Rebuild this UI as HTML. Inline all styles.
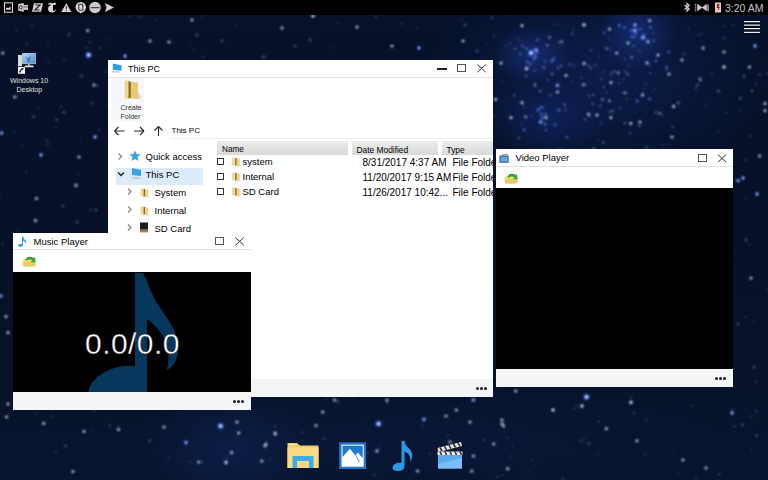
<!DOCTYPE html>
<html><head><meta charset="utf-8">
<style>
*{margin:0;padding:0;box-sizing:border-box}
html,body{width:768px;height:480px;overflow:hidden;font-family:"Liberation Sans",sans-serif}
body{position:relative;background:#07101f}
.a{position:absolute}
.t{position:absolute;white-space:nowrap;line-height:1}
#bg{position:absolute;left:0;top:0;width:768px;height:480px;
background:
radial-gradient(ellipse 40px 30px at 532px 55px, rgba(40,80,200,0.35), rgba(40,80,200,0) 100%),
radial-gradient(ellipse 40px 40px at 638px 32px, rgba(40,80,200,0.35), rgba(40,80,200,0) 100%),
radial-gradient(ellipse 170px 110px at 600px 75px, rgba(18,45,120,0.42), rgba(18,45,120,0) 100%),
radial-gradient(ellipse 60px 40px at 548px 118px, rgba(30,60,170,0.3), rgba(30,60,170,0) 100%),
radial-gradient(ellipse 90px 60px at 230px 450px, rgba(18,45,110,0.35), rgba(18,45,110,0) 100%),
radial-gradient(ellipse 300px 60px at 420px 440px, rgba(12,30,70,0.4), rgba(12,30,70,0) 100%),
linear-gradient(#06112a,#061026 50%,#08142e);
}
.win{position:absolute;background:#fff;overflow:hidden}
.sep{position:absolute;height:1px;background:#dcdcdc}
.foot{position:absolute;background:#f4f5f7}
.dots{position:absolute;width:12px;height:3px}
.dots i{position:absolute;top:0;width:3px;height:3px;border-radius:50%;background:#1a1a1a}
</style></head><body>
<div id="bg"></div>
<svg class="a" style="left:0;top:0;filter:blur(0.9px)" width="768" height="480" viewBox="0 0 768 480">
<circle cx="514.3" cy="95.1" r="1.2" fill="#5068c0" opacity="0.83"/>
<circle cx="646.6" cy="147.1" r="1.3" fill="#5068c0" opacity="0.80"/>
<circle cx="649.4" cy="99.0" r="1.2" fill="#8090d0" opacity="0.85"/>
<circle cx="537.5" cy="39.8" r="1.5" fill="#5068c0" opacity="0.73"/>
<circle cx="569.4" cy="64.5" r="1.4" fill="#8090d0" opacity="0.43"/>
<circle cx="740.4" cy="98.3" r="1.4" fill="#8090d0" opacity="0.56"/>
<circle cx="561.2" cy="65.7" r="1.3" fill="#6878c8" opacity="0.65"/>
<circle cx="559.5" cy="42.3" r="1.1" fill="#a0b0e0" opacity="0.68"/>
<circle cx="626.5" cy="73.1" r="1.1" fill="#a0b0e0" opacity="0.51"/>
<circle cx="593.5" cy="94.8" r="1.1" fill="#8090d0" opacity="0.82"/>
<circle cx="601.3" cy="78.9" r="1.5" fill="#6878c8" opacity="0.43"/>
<circle cx="522.0" cy="124.3" r="0.9" fill="#5068c0" opacity="0.71"/>
<circle cx="609.9" cy="48.8" r="1.1" fill="#8090d0" opacity="0.41"/>
<circle cx="672.7" cy="126.9" r="0.9" fill="#8090d0" opacity="0.80"/>
<circle cx="639.3" cy="126.0" r="1.2" fill="#5068c0" opacity="0.89"/>
<circle cx="608.9" cy="38.6" r="1.0" fill="#5068c0" opacity="0.61"/>
<circle cx="612.8" cy="110.9" r="1.5" fill="#a0b0e0" opacity="0.41"/>
<circle cx="526.4" cy="48.6" r="1.5" fill="#8090d0" opacity="0.51"/>
<circle cx="593.7" cy="148.8" r="1.4" fill="#a0b0e0" opacity="0.59"/>
<circle cx="642.8" cy="92.3" r="0.9" fill="#6878c8" opacity="0.58"/>
<circle cx="573.7" cy="65.5" r="1.4" fill="#5068c0" opacity="0.47"/>
<circle cx="525.8" cy="116.9" r="1.4" fill="#a0b0e0" opacity="0.81"/>
<circle cx="600.1" cy="106.0" r="1.3" fill="#6878c8" opacity="0.59"/>
<circle cx="571.9" cy="81.8" r="1.0" fill="#8090d0" opacity="0.42"/>
<circle cx="650.2" cy="73.1" r="1.1" fill="#5068c0" opacity="0.81"/>
<circle cx="552.0" cy="61.0" r="1.5" fill="#6878c8" opacity="0.89"/>
<circle cx="656.0" cy="112.6" r="1.1" fill="#8090d0" opacity="0.86"/>
<circle cx="603.6" cy="87.0" r="1.1" fill="#a0b0e0" opacity="0.52"/>
<circle cx="654.5" cy="89.4" r="1.0" fill="#6878c8" opacity="0.47"/>
<circle cx="540.3" cy="91.0" r="1.3" fill="#6878c8" opacity="0.86"/>
<circle cx="535.0" cy="85.9" r="1.5" fill="#a0b0e0" opacity="0.41"/>
<circle cx="547.3" cy="45.3" r="1.1" fill="#a0b0e0" opacity="0.90"/>
<circle cx="678.3" cy="102.9" r="1.4" fill="#8090d0" opacity="0.77"/>
<circle cx="656.1" cy="61.0" r="1.4" fill="#5068c0" opacity="0.84"/>
<circle cx="492.6" cy="115.2" r="1.2" fill="#5068c0" opacity="0.71"/>
<circle cx="531.6" cy="115.6" r="0.9" fill="#8090d0" opacity="0.72"/>
<circle cx="744.0" cy="76.5" r="1.1" fill="#a0b0e0" opacity="0.77"/>
<circle cx="534.1" cy="59.0" r="1.2" fill="#8090d0" opacity="0.66"/>
<circle cx="588.9" cy="95.9" r="1.0" fill="#8090d0" opacity="0.75"/>
<circle cx="503.4" cy="81.0" r="1.1" fill="#5068c0" opacity="0.41"/>
<circle cx="566.8" cy="137.2" r="1.2" fill="#6878c8" opacity="0.78"/>
<circle cx="548.0" cy="80.3" r="1.3" fill="#5068c0" opacity="0.50"/>
<circle cx="723.8" cy="37.7" r="1.0" fill="#5068c0" opacity="0.86"/>
<circle cx="609.4" cy="100.8" r="1.4" fill="#a0b0e0" opacity="0.82"/>
<circle cx="592.9" cy="104.0" r="1.2" fill="#5068c0" opacity="0.86"/>
<circle cx="633.5" cy="45.7" r="1.3" fill="#5068c0" opacity="0.76"/>
<circle cx="653.5" cy="33.1" r="0.9" fill="#a0b0e0" opacity="0.42"/>
<circle cx="614.2" cy="71.7" r="1.2" fill="#a0b0e0" opacity="0.55"/>
<circle cx="603.5" cy="72.4" r="1.1" fill="#6878c8" opacity="0.49"/>
<circle cx="606.6" cy="48.7" r="1.4" fill="#6878c8" opacity="0.89"/>
<circle cx="625.2" cy="92.7" r="1.5" fill="#a0b0e0" opacity="0.74"/>
<circle cx="624.9" cy="123.1" r="1.3" fill="#6878c8" opacity="0.78"/>
<circle cx="581.5" cy="77.6" r="1.1" fill="#6878c8" opacity="0.57"/>
<circle cx="572.4" cy="34.1" r="1.1" fill="#6878c8" opacity="0.80"/>
<circle cx="624.9" cy="70.5" r="1.0" fill="#5068c0" opacity="0.63"/>
<circle cx="491.8" cy="17.7" r="1.2" fill="#5068c0" opacity="0.73"/>
<circle cx="565.6" cy="109.6" r="1.0" fill="#6878c8" opacity="0.83"/>
<circle cx="637.2" cy="100.9" r="1.5" fill="#5068c0" opacity="0.89"/>
<circle cx="640.0" cy="50.9" r="0.9" fill="#8090d0" opacity="0.57"/>
<circle cx="550.5" cy="95.2" r="1.0" fill="#8090d0" opacity="0.83"/>
<circle cx="583.1" cy="84.6" r="1.3" fill="#a0b0e0" opacity="0.86"/>
<circle cx="668.6" cy="51.7" r="1.5" fill="#5068c0" opacity="0.65"/>
<circle cx="628.2" cy="74.7" r="1.2" fill="#6878c8" opacity="0.68"/>
<circle cx="643.9" cy="35.2" r="1.2" fill="#6878c8" opacity="0.82"/>
<circle cx="543.7" cy="67.3" r="1.5" fill="#5068c0" opacity="0.84"/>
<circle cx="553.9" cy="58.4" r="1.5" fill="#6878c8" opacity="0.66"/>
<circle cx="558.0" cy="68.1" r="1.2" fill="#8090d0" opacity="0.70"/>
<circle cx="782.1" cy="98.3" r="1.2" fill="#5068c0" opacity="0.89"/>
<circle cx="622.3" cy="92.3" r="0.9" fill="#6878c8" opacity="0.67"/>
<circle cx="649.1" cy="65.3" r="1.2" fill="#5068c0" opacity="0.57"/>
<circle cx="733.2" cy="25.3" r="1.2" fill="#5068c0" opacity="0.45"/>
<circle cx="585.0" cy="84.7" r="1.0" fill="#a0b0e0" opacity="0.79"/>
<circle cx="645.5" cy="83.7" r="0.9" fill="#6878c8" opacity="0.54"/>
<circle cx="591.3" cy="50.5" r="1.0" fill="#5068c0" opacity="0.77"/>
<circle cx="660.0" cy="113.3" r="1.3" fill="#a0b0e0" opacity="0.75"/>
<circle cx="611.0" cy="74.0" r="1.4" fill="#5068c0" opacity="0.71"/>
<circle cx="552.0" cy="74.0" r="1.4" fill="#6878c8" opacity="0.71"/>
<circle cx="631.7" cy="57.2" r="1.4" fill="#a0b0e0" opacity="0.56"/>
<circle cx="628.6" cy="66.1" r="1.0" fill="#6878c8" opacity="0.44"/>
<circle cx="543.0" cy="107.7" r="1.2" fill="#5068c0" opacity="0.75"/>
<circle cx="630.0" cy="133.6" r="1.0" fill="#8090d0" opacity="0.68"/>
<circle cx="518.8" cy="137.9" r="1.0" fill="#a0b0e0" opacity="0.65"/>
<circle cx="604.2" cy="32.8" r="1.4" fill="#6878c8" opacity="0.64"/>
<circle cx="717.2" cy="90.3" r="1.0" fill="#5068c0" opacity="0.49"/>
<circle cx="759.8" cy="74.4" r="1.2" fill="#8090d0" opacity="0.47"/>
<circle cx="588.2" cy="65.4" r="1.1" fill="#8090d0" opacity="0.63"/>
<circle cx="526.1" cy="75.9" r="0.9" fill="#a0b0e0" opacity="0.75"/>
<circle cx="624.7" cy="59.0" r="1.1" fill="#5068c0" opacity="0.59"/>
<circle cx="684.1" cy="54.3" r="1.2" fill="#8090d0" opacity="0.41"/>
<circle cx="698.6" cy="35.3" r="1.2" fill="#5068c0" opacity="0.50"/>
<circle cx="544.9" cy="61.5" r="1.1" fill="#a0b0e0" opacity="0.46"/>
<circle cx="598.2" cy="56.4" r="1.0" fill="#5068c0" opacity="0.56"/>
<circle cx="534.7" cy="70.7" r="1.4" fill="#5068c0" opacity="0.60"/>
<circle cx="595.4" cy="64.9" r="1.1" fill="#a0b0e0" opacity="0.45"/>
<circle cx="618.3" cy="72.7" r="1.5" fill="#a0b0e0" opacity="0.73"/>
<circle cx="546.1" cy="130.0" r="1.2" fill="#6878c8" opacity="0.59"/>
<circle cx="700.4" cy="80.0" r="1.4" fill="#8090d0" opacity="0.89"/>
<circle cx="695.8" cy="87.9" r="1.1" fill="#6878c8" opacity="0.60"/>
<circle cx="643.9" cy="88.2" r="0.9" fill="#5068c0" opacity="0.53"/>
<circle cx="589.7" cy="116.0" r="1.5" fill="#5068c0" opacity="0.68"/>
<circle cx="699.7" cy="78.2" r="1.2" fill="#8090d0" opacity="0.73"/>
<circle cx="666.5" cy="69.1" r="1.1" fill="#6878c8" opacity="0.89"/>
<circle cx="653.9" cy="40.6" r="1.2" fill="#8090d0" opacity="0.65"/>
<circle cx="584.8" cy="119.4" r="1.1" fill="#a0b0e0" opacity="0.54"/>
<circle cx="549.6" cy="37.5" r="1.3" fill="#a0b0e0" opacity="0.77"/>
<circle cx="718.7" cy="91.6" r="1.3" fill="#8090d0" opacity="0.60"/>
<circle cx="590.8" cy="67.9" r="1.3" fill="#a0b0e0" opacity="0.43"/>
<circle cx="767.9" cy="73.2" r="1.4" fill="#8090d0" opacity="0.51"/>
<circle cx="589.7" cy="50.2" r="0.9" fill="#6878c8" opacity="0.45"/>
<circle cx="603.3" cy="142.6" r="1.3" fill="#8090d0" opacity="0.63"/>
<circle cx="606.6" cy="92.5" r="1.0" fill="#6878c8" opacity="0.62"/>
<circle cx="561.9" cy="41.6" r="1.3" fill="#a0b0e0" opacity="0.74"/>
<circle cx="524.1" cy="129.8" r="1.5" fill="#6878c8" opacity="0.77"/>
<circle cx="602.5" cy="99.6" r="1.4" fill="#a0b0e0" opacity="0.71"/>
<circle cx="564.7" cy="104.6" r="1.3" fill="#6878c8" opacity="0.78"/>
<circle cx="619.6" cy="108.1" r="1.4" fill="#6878c8" opacity="0.42"/>
<circle cx="651.6" cy="91.9" r="0.9" fill="#5068c0" opacity="0.42"/>
<circle cx="609.7" cy="111.8" r="1.4" fill="#8090d0" opacity="0.48"/>
<circle cx="534.9" cy="83.8" r="1.1" fill="#a0b0e0" opacity="0.77"/>
<circle cx="532.5" cy="51.0" r="1.1" fill="#5a7af0" opacity="0.82"/>
<circle cx="522.5" cy="45.8" r="1.2" fill="#5a7af0" opacity="0.67"/>
<circle cx="530.4" cy="63.9" r="1.3" fill="#5a7af0" opacity="0.76"/>
<circle cx="537.2" cy="52.6" r="1.4" fill="#5a7af0" opacity="0.80"/>
<circle cx="537.5" cy="50.0" r="1.3" fill="#5a7af0" opacity="0.54"/>
<circle cx="533.0" cy="51.3" r="1.1" fill="#5a7af0" opacity="0.73"/>
<circle cx="520.4" cy="53.9" r="1.2" fill="#5a7af0" opacity="0.81"/>
<circle cx="535.3" cy="54.9" r="1.5" fill="#5a7af0" opacity="0.53"/>
<circle cx="527.3" cy="62.1" r="1.6" fill="#5a7af0" opacity="0.61"/>
<circle cx="535.1" cy="57.4" r="1.6" fill="#5a7af0" opacity="0.65"/>
<circle cx="644.1" cy="38.3" r="1.5" fill="#5a7af0" opacity="0.87"/>
<circle cx="650.4" cy="27.1" r="1.4" fill="#5a7af0" opacity="0.82"/>
<circle cx="633.9" cy="36.9" r="1.3" fill="#5a7af0" opacity="0.87"/>
<circle cx="640.2" cy="29.2" r="1.3" fill="#5a7af0" opacity="0.65"/>
<circle cx="631.4" cy="36.6" r="1.3" fill="#5a7af0" opacity="0.58"/>
<circle cx="624.5" cy="27.8" r="1.4" fill="#5a7af0" opacity="0.83"/>
<circle cx="632.0" cy="30.6" r="1.6" fill="#5a7af0" opacity="0.85"/>
<circle cx="635.7" cy="33.2" r="1.4" fill="#5a7af0" opacity="0.72"/>
<circle cx="619.4" cy="25.6" r="1.5" fill="#5a7af0" opacity="0.82"/>
<circle cx="644.1" cy="35.0" r="1.6" fill="#5a7af0" opacity="0.53"/>
<circle cx="555.0" cy="124.8" r="1.7" fill="#5a7af0" opacity="0.53"/>
<circle cx="542.4" cy="117.5" r="1.6" fill="#5a7af0" opacity="0.76"/>
<circle cx="545.1" cy="124.2" r="1.6" fill="#5a7af0" opacity="0.71"/>
<circle cx="545.6" cy="114.0" r="1.3" fill="#5a7af0" opacity="0.89"/>
<circle cx="541.2" cy="113.8" r="1.4" fill="#5a7af0" opacity="0.79"/>
<circle cx="541.0" cy="107.1" r="1.3" fill="#5a7af0" opacity="0.83"/>
<circle cx="538.1" cy="109.8" r="1.6" fill="#5a7af0" opacity="0.83"/>
<circle cx="558.5" cy="110.3" r="1.5" fill="#5a7af0" opacity="0.71"/>
<circle cx="192.0" cy="20.0" r="1.6" fill="#c0cae6" opacity="0.9"/>
<circle cx="150.0" cy="41.0" r="1.6" fill="#c0cae6" opacity="0.9"/>
<circle cx="169.0" cy="42.0" r="1.6" fill="#c0cae6" opacity="0.9"/>
<circle cx="197.0" cy="35.0" r="1.4" fill="#6a78a0" opacity="0.6"/>
<circle cx="282.0" cy="28.0" r="1.6" fill="#c0cae6" opacity="0.9"/>
<circle cx="125.0" cy="56.0" r="2.4" fill="#3058e0" opacity="0.5"/><circle cx="125.0" cy="56.0" r="1.2" fill="#d0dcff"/>
<circle cx="295.0" cy="46.0" r="1.4" fill="#6a78a0" opacity="0.6"/>
<circle cx="222.0" cy="41.0" r="1.4" fill="#6a78a0" opacity="0.6"/>
<circle cx="264.0" cy="57.0" r="1.4" fill="#6a78a0" opacity="0.6"/>
<circle cx="313.0" cy="16.0" r="2.2" fill="#8090c0" opacity="0.45"/><circle cx="313.0" cy="16.0" r="1.3" fill="#f0f4ff"/>
<circle cx="357.0" cy="27.0" r="1.6" fill="#c0cae6" opacity="0.9"/>
<circle cx="392.0" cy="46.0" r="1.6" fill="#c0cae6" opacity="0.9"/>
<circle cx="419.0" cy="48.0" r="2.4" fill="#3058e0" opacity="0.5"/><circle cx="419.0" cy="48.0" r="1.2" fill="#d0dcff"/>
<circle cx="463.0" cy="41.0" r="1.6" fill="#c0cae6" opacity="0.9"/>
<circle cx="465.0" cy="25.0" r="1.4" fill="#6a78a0" opacity="0.6"/>
<circle cx="310.0" cy="40.0" r="1.4" fill="#6a78a0" opacity="0.6"/>
<circle cx="477.0" cy="51.0" r="1.4" fill="#6a78a0" opacity="0.6"/>
<circle cx="14.6" cy="97.0" r="1.6" fill="#c0cae6" opacity="0.9"/>
<circle cx="1.5" cy="133.0" r="2.4" fill="#3058e0" opacity="0.5"/><circle cx="1.5" cy="133.0" r="1.2" fill="#d0dcff"/>
<circle cx="41.0" cy="155.0" r="2.4" fill="#3058e0" opacity="0.5"/><circle cx="41.0" cy="155.0" r="1.2" fill="#d0dcff"/>
<circle cx="79.0" cy="157.0" r="1.6" fill="#c0cae6" opacity="0.9"/>
<circle cx="95.0" cy="137.0" r="2.4" fill="#3058e0" opacity="0.5"/><circle cx="95.0" cy="137.0" r="1.2" fill="#d0dcff"/>
<circle cx="36.5" cy="198.5" r="1.6" fill="#c0cae6" opacity="0.9"/>
<circle cx="76.0" cy="185.4" r="1.6" fill="#c0cae6" opacity="0.9"/>
<circle cx="35.6" cy="220.4" r="1.6" fill="#c0cae6" opacity="0.9"/>
<circle cx="33.5" cy="117.0" r="1.4" fill="#6a78a0" opacity="0.6"/>
<circle cx="57.0" cy="120.0" r="1.4" fill="#6a78a0" opacity="0.6"/>
<circle cx="64.0" cy="112.5" r="1.4" fill="#6a78a0" opacity="0.6"/>
<circle cx="62.7" cy="206.0" r="1.4" fill="#6a78a0" opacity="0.6"/>
<circle cx="77.0" cy="222.0" r="1.4" fill="#6a78a0" opacity="0.6"/>
<circle cx="96.0" cy="210.0" r="1.4" fill="#6a78a0" opacity="0.6"/>
<circle cx="88.6" cy="55.0" r="3.5" fill="#3060ff" opacity="0.55"/><circle cx="88.6" cy="55.0" r="1.8" fill="#f0f4ff"/>
<circle cx="87.7" cy="30.6" r="1.6" fill="#c0cae6" opacity="0.9"/>
<circle cx="2.7" cy="53.0" r="1.6" fill="#c0cae6" opacity="0.9"/>
<circle cx="94.0" cy="85.0" r="1.6" fill="#c0cae6" opacity="0.9"/>
<circle cx="81.5" cy="76.0" r="1.4" fill="#6a78a0" opacity="0.6"/>
<circle cx="16.0" cy="97.0" r="1.4" fill="#6a78a0" opacity="0.6"/>
<circle cx="69.0" cy="34.5" r="1.4" fill="#6a78a0" opacity="0.6"/>
<circle cx="584.0" cy="25.0" r="2.2" fill="#8090c0" opacity="0.45"/><circle cx="584.0" cy="25.0" r="1.3" fill="#f0f4ff"/>
<circle cx="522.0" cy="25.7" r="1.6" fill="#c0cae6" opacity="0.9"/>
<circle cx="609.6" cy="29.0" r="1.6" fill="#c0cae6" opacity="0.9"/>
<circle cx="635.0" cy="25.0" r="2.4" fill="#3058e0" opacity="0.5"/><circle cx="635.0" cy="25.0" r="1.2" fill="#d0dcff"/>
<circle cx="635.0" cy="30.5" r="2.4" fill="#3058e0" opacity="0.5"/><circle cx="635.0" cy="30.5" r="1.2" fill="#d0dcff"/>
<circle cx="628.0" cy="43.0" r="1.6" fill="#c0cae6" opacity="0.9"/>
<circle cx="531.0" cy="53.0" r="3.5" fill="#3060ff" opacity="0.55"/><circle cx="531.0" cy="53.0" r="1.8" fill="#f0f4ff"/>
<circle cx="536.0" cy="50.0" r="2.4" fill="#3058e0" opacity="0.5"/><circle cx="536.0" cy="50.0" r="1.2" fill="#d0dcff"/>
<circle cx="526.6" cy="68.5" r="2.2" fill="#8090c0" opacity="0.45"/><circle cx="526.6" cy="68.5" r="1.3" fill="#f0f4ff"/>
<circle cx="501.0" cy="63.0" r="1.6" fill="#c0cae6" opacity="0.9"/>
<circle cx="616.6" cy="53.0" r="1.6" fill="#c0cae6" opacity="0.9"/>
<circle cx="584.0" cy="63.4" r="1.6" fill="#c0cae6" opacity="0.9"/>
<circle cx="566.0" cy="75.5" r="1.6" fill="#c0cae6" opacity="0.9"/>
<circle cx="611.0" cy="82.5" r="1.6" fill="#c0cae6" opacity="0.9"/>
<circle cx="557.5" cy="85.4" r="2.4" fill="#3058e0" opacity="0.5"/><circle cx="557.5" cy="85.4" r="1.2" fill="#d0dcff"/>
<circle cx="557.5" cy="92.0" r="1.6" fill="#c0cae6" opacity="0.9"/>
<circle cx="495.6" cy="99.4" r="1.6" fill="#c0cae6" opacity="0.9"/>
<circle cx="522.0" cy="102.8" r="1.6" fill="#c0cae6" opacity="0.9"/>
<circle cx="511.0" cy="117.7" r="1.6" fill="#c0cae6" opacity="0.9"/>
<circle cx="540.7" cy="122.0" r="2.4" fill="#3058e0" opacity="0.5"/><circle cx="540.7" cy="122.0" r="1.2" fill="#d0dcff"/>
<circle cx="546.0" cy="117.7" r="1.6" fill="#c0cae6" opacity="0.9"/>
<circle cx="588.5" cy="114.0" r="1.6" fill="#c0cae6" opacity="0.9"/>
<circle cx="597.0" cy="115.0" r="1.6" fill="#c0cae6" opacity="0.9"/>
<circle cx="611.0" cy="117.7" r="1.6" fill="#c0cae6" opacity="0.9"/>
<circle cx="630.7" cy="123.4" r="1.6" fill="#c0cae6" opacity="0.9"/>
<circle cx="515.0" cy="48.8" r="1.4" fill="#6a78a0" opacity="0.6"/>
<circle cx="649.7" cy="20.6" r="1.6" fill="#c0cae6" opacity="0.9"/>
<circle cx="642.6" cy="37.5" r="2.4" fill="#3058e0" opacity="0.5"/><circle cx="642.6" cy="37.5" r="1.2" fill="#d0dcff"/>
<circle cx="648.0" cy="41.7" r="2.4" fill="#3058e0" opacity="0.5"/><circle cx="648.0" cy="41.7" r="1.2" fill="#d0dcff"/>
<circle cx="658.0" cy="55.0" r="1.6" fill="#c0cae6" opacity="0.9"/>
<circle cx="703.0" cy="48.0" r="1.6" fill="#c0cae6" opacity="0.9"/>
<circle cx="724.0" cy="52.0" r="1.6" fill="#c0cae6" opacity="0.9"/>
<circle cx="724.0" cy="67.0" r="2.2" fill="#8090c0" opacity="0.45"/><circle cx="724.0" cy="67.0" r="1.3" fill="#f0f4ff"/>
<circle cx="682.0" cy="60.0" r="1.6" fill="#c0cae6" opacity="0.9"/>
<circle cx="669.0" cy="74.0" r="1.6" fill="#c0cae6" opacity="0.9"/>
<circle cx="666.5" cy="67.0" r="1.4" fill="#6a78a0" opacity="0.6"/>
<circle cx="647.0" cy="62.8" r="1.6" fill="#c0cae6" opacity="0.9"/>
<circle cx="749.5" cy="67.0" r="1.6" fill="#c0cae6" opacity="0.9"/>
<circle cx="755.0" cy="46.0" r="2.4" fill="#3058e0" opacity="0.5"/><circle cx="755.0" cy="46.0" r="1.2" fill="#d0dcff"/>
<circle cx="642.6" cy="95.0" r="1.6" fill="#c0cae6" opacity="0.9"/>
<circle cx="673.6" cy="106.4" r="1.6" fill="#c0cae6" opacity="0.9"/>
<circle cx="640.0" cy="122.0" r="1.6" fill="#c0cae6" opacity="0.9"/>
<circle cx="672.0" cy="137.0" r="1.6" fill="#c0cae6" opacity="0.9"/>
<circle cx="765.0" cy="103.6" r="1.6" fill="#c0cae6" opacity="0.9"/>
<circle cx="765.0" cy="110.6" r="1.6" fill="#c0cae6" opacity="0.9"/>
<circle cx="697.5" cy="85.0" r="1.4" fill="#6a78a0" opacity="0.6"/>
<circle cx="752.0" cy="91.0" r="1.4" fill="#6a78a0" opacity="0.6"/>
<circle cx="738.0" cy="180.6" r="2.4" fill="#3058e0" opacity="0.5"/><circle cx="738.0" cy="180.6" r="1.2" fill="#d0dcff"/>
<circle cx="743.0" cy="178.0" r="2.4" fill="#3058e0" opacity="0.5"/><circle cx="743.0" cy="178.0" r="1.2" fill="#d0dcff"/>
<circle cx="757.0" cy="194.0" r="2.4" fill="#3058e0" opacity="0.5"/><circle cx="757.0" cy="194.0" r="1.2" fill="#d0dcff"/>
<circle cx="759.6" cy="156.0" r="1.6" fill="#c0cae6" opacity="0.9"/>
<circle cx="746.0" cy="240.0" r="1.4" fill="#6a78a0" opacity="0.6"/>
<circle cx="751.0" cy="278.0" r="1.6" fill="#c0cae6" opacity="0.9"/>
<circle cx="738.0" cy="324.0" r="1.4" fill="#6a78a0" opacity="0.6"/>
<circle cx="754.0" cy="367.5" r="1.4" fill="#6a78a0" opacity="0.6"/>
<circle cx="220.6" cy="426.0" r="3.5" fill="#3060ff" opacity="0.55"/><circle cx="220.6" cy="426.0" r="1.8" fill="#f0f4ff"/>
<circle cx="186.0" cy="442.4" r="2.4" fill="#3058e0" opacity="0.5"/><circle cx="186.0" cy="442.4" r="1.2" fill="#d0dcff"/>
<circle cx="226.0" cy="462.4" r="2.2" fill="#8090c0" opacity="0.45"/><circle cx="226.0" cy="462.4" r="1.3" fill="#f0f4ff"/>
<circle cx="231.5" cy="452.6" r="1.6" fill="#c0cae6" opacity="0.9"/>
<circle cx="164.0" cy="427.0" r="1.6" fill="#c0cae6" opacity="0.9"/>
<circle cx="118.5" cy="429.6" r="1.6" fill="#c0cae6" opacity="0.9"/>
<circle cx="83.9" cy="431.5" r="1.6" fill="#c0cae6" opacity="0.9"/>
<circle cx="43.7" cy="423.4" r="1.6" fill="#c0cae6" opacity="0.9"/>
<circle cx="6.6" cy="417.0" r="1.6" fill="#c0cae6" opacity="0.9"/>
<circle cx="65.6" cy="446.0" r="1.4" fill="#6a78a0" opacity="0.6"/>
<circle cx="266.0" cy="444.0" r="1.6" fill="#c0cae6" opacity="0.9"/>
<circle cx="275.0" cy="433.0" r="1.6" fill="#c0cae6" opacity="0.9"/>
<circle cx="73.0" cy="471.6" r="1.6" fill="#c0cae6" opacity="0.9"/>
<circle cx="198.7" cy="462.0" r="1.6" fill="#c0cae6" opacity="0.9"/>
<circle cx="237.0" cy="422.0" r="1.6" fill="#c0cae6" opacity="0.9"/>
<circle cx="238.8" cy="433.0" r="1.6" fill="#c0cae6" opacity="0.9"/>
<circle cx="149.5" cy="440.6" r="1.4" fill="#6a78a0" opacity="0.6"/>
<circle cx="378.6" cy="423.8" r="3.5" fill="#3060ff" opacity="0.55"/><circle cx="378.6" cy="423.8" r="1.8" fill="#f0f4ff"/>
<circle cx="424.0" cy="419.4" r="2.4" fill="#3058e0" opacity="0.5"/><circle cx="424.0" cy="419.4" r="1.2" fill="#d0dcff"/>
<circle cx="334.6" cy="400.0" r="1.6" fill="#c0cae6" opacity="0.9"/>
<circle cx="387.0" cy="400.0" r="1.6" fill="#c0cae6" opacity="0.9"/>
<circle cx="322.8" cy="412.0" r="1.6" fill="#c0cae6" opacity="0.9"/>
<circle cx="316.0" cy="425.5" r="1.6" fill="#c0cae6" opacity="0.9"/>
<circle cx="446.0" cy="416.0" r="1.6" fill="#c0cae6" opacity="0.9"/>
<circle cx="456.5" cy="410.0" r="1.6" fill="#c0cae6" opacity="0.9"/>
<circle cx="473.4" cy="400.0" r="2.4" fill="#3058e0" opacity="0.5"/><circle cx="473.4" cy="400.0" r="1.2" fill="#d0dcff"/>
<circle cx="470.0" cy="422.0" r="1.6" fill="#c0cae6" opacity="0.9"/>
<circle cx="265.0" cy="445.8" r="1.6" fill="#c0cae6" opacity="0.9"/>
<circle cx="275.4" cy="434.0" r="1.6" fill="#c0cae6" opacity="0.9"/>
<circle cx="377.0" cy="450.9" r="1.6" fill="#c0cae6" opacity="0.9"/>
<circle cx="417.6" cy="471.0" r="1.6" fill="#c0cae6" opacity="0.9"/>
<circle cx="471.7" cy="471.0" r="1.6" fill="#c0cae6" opacity="0.9"/>
<circle cx="473.4" cy="456.0" r="1.6" fill="#c0cae6" opacity="0.9"/>
<circle cx="493.7" cy="444.0" r="1.6" fill="#c0cae6" opacity="0.9"/>
<circle cx="502.0" cy="423.8" r="1.6" fill="#c0cae6" opacity="0.9"/>
<circle cx="450.0" cy="442.0" r="1.6" fill="#c0cae6" opacity="0.9"/>
<circle cx="261.8" cy="461.0" r="1.6" fill="#c0cae6" opacity="0.9"/>
<circle cx="338.0" cy="401.8" r="1.4" fill="#6a78a0" opacity="0.6"/>
<circle cx="586.5" cy="397.0" r="3.5" fill="#3060ff" opacity="0.55"/><circle cx="586.5" cy="397.0" r="1.8" fill="#f0f4ff"/>
<circle cx="582.0" cy="406.0" r="2.2" fill="#8090c0" opacity="0.45"/><circle cx="582.0" cy="406.0" r="1.3" fill="#f0f4ff"/>
<circle cx="631.0" cy="402.4" r="2.2" fill="#8090c0" opacity="0.45"/><circle cx="631.0" cy="402.4" r="1.3" fill="#f0f4ff"/>
<circle cx="553.0" cy="410.0" r="2.2" fill="#8090c0" opacity="0.45"/><circle cx="553.0" cy="410.0" r="1.3" fill="#f0f4ff"/>
<circle cx="503.5" cy="426.0" r="1.6" fill="#c0cae6" opacity="0.9"/>
<circle cx="502.0" cy="420.0" r="1.6" fill="#c0cae6" opacity="0.9"/>
<circle cx="606.4" cy="428.6" r="1.6" fill="#c0cae6" opacity="0.9"/>
<circle cx="637.0" cy="440.8" r="1.6" fill="#c0cae6" opacity="0.9"/>
<circle cx="683.0" cy="460.0" r="1.6" fill="#c0cae6" opacity="0.9"/>
<circle cx="706.0" cy="468.0" r="1.6" fill="#c0cae6" opacity="0.9"/>
<circle cx="507.7" cy="468.7" r="1.6" fill="#c0cae6" opacity="0.9"/>
<circle cx="515.7" cy="391.0" r="1.6" fill="#c0cae6" opacity="0.9"/>
<circle cx="732.0" cy="413.0" r="2.4" fill="#3058e0" opacity="0.5"/><circle cx="732.0" cy="413.0" r="1.2" fill="#d0dcff"/>
<circle cx="756.5" cy="435.6" r="1.4" fill="#6a78a0" opacity="0.6"/>
<circle cx="742.5" cy="425.0" r="1.4" fill="#6a78a0" opacity="0.6"/>
<circle cx="589.0" cy="443.6" r="1.4" fill="#6a78a0" opacity="0.6"/>
<circle cx="1.0" cy="296.0" r="2.4" fill="#3058e0" opacity="0.5"/><circle cx="1.0" cy="296.0" r="1.2" fill="#d0dcff"/>
<circle cx="6.0" cy="316.5" r="1.6" fill="#c0cae6" opacity="0.9"/>
<circle cx="8.0" cy="332.7" r="1.6" fill="#c0cae6" opacity="0.9"/>
<circle cx="8.0" cy="404.0" r="1.6" fill="#c0cae6" opacity="0.9"/>
<circle cx="248.7" cy="85.1" r="1.2" fill="#4a5a88" opacity="0.56"/>
<circle cx="55.6" cy="264.2" r="1.2" fill="#4a5a88" opacity="0.45"/>
<circle cx="44.5" cy="251.0" r="1.2" fill="#4a5a88" opacity="0.31"/>
<circle cx="333.0" cy="47.5" r="1.2" fill="#4a5a88" opacity="0.34"/>
<circle cx="326.0" cy="399.5" r="1.2" fill="#4a5a88" opacity="0.35"/>
<circle cx="171.4" cy="306.8" r="1.2" fill="#4a5a88" opacity="0.68"/>
<circle cx="443.2" cy="199.5" r="1.2" fill="#4a5a88" opacity="0.69"/>
<circle cx="35.8" cy="414.2" r="1.2" fill="#4a5a88" opacity="0.42"/>
<circle cx="110.8" cy="69.8" r="1.2" fill="#4a5a88" opacity="0.42"/>
<circle cx="626.8" cy="99.0" r="1.2" fill="#4a5a88" opacity="0.53"/>
<circle cx="490.7" cy="188.2" r="1.2" fill="#4a5a88" opacity="0.52"/>
<circle cx="48.2" cy="42.7" r="1.2" fill="#4a5a88" opacity="0.38"/>
<circle cx="522.5" cy="213.8" r="1.2" fill="#4a5a88" opacity="0.43"/>
<circle cx="449.7" cy="225.7" r="1.2" fill="#4a5a88" opacity="0.42"/>
<circle cx="610.1" cy="340.0" r="1.2" fill="#4a5a88" opacity="0.40"/>
<circle cx="441.2" cy="259.2" r="1.2" fill="#4a5a88" opacity="0.65"/>
<circle cx="560.2" cy="148.9" r="1.2" fill="#4a5a88" opacity="0.69"/>
<circle cx="90.7" cy="209.4" r="1.2" fill="#4a5a88" opacity="0.60"/>
<circle cx="116.7" cy="242.4" r="1.2" fill="#4a5a88" opacity="0.32"/>
<circle cx="513.2" cy="370.5" r="1.2" fill="#4a5a88" opacity="0.53"/>
<circle cx="672.4" cy="160.9" r="1.2" fill="#4a5a88" opacity="0.58"/>
<circle cx="456.5" cy="284.7" r="1.2" fill="#4a5a88" opacity="0.48"/>
<circle cx="645.1" cy="454.3" r="1.2" fill="#4a5a88" opacity="0.49"/>
<circle cx="510.1" cy="43.2" r="1.2" fill="#4a5a88" opacity="0.58"/>
<circle cx="497.0" cy="476.8" r="1.2" fill="#4a5a88" opacity="0.63"/>
<circle cx="218.6" cy="194.4" r="1.2" fill="#4a5a88" opacity="0.57"/>
<circle cx="17.3" cy="229.7" r="1.2" fill="#4a5a88" opacity="0.37"/>
<circle cx="89.9" cy="42.4" r="1.2" fill="#4a5a88" opacity="0.61"/>
<circle cx="99.3" cy="130.1" r="1.2" fill="#4a5a88" opacity="0.46"/>
<circle cx="669.3" cy="52.5" r="1.2" fill="#4a5a88" opacity="0.48"/>
<circle cx="422.0" cy="425.8" r="1.2" fill="#4a5a88" opacity="0.63"/>
<circle cx="663.5" cy="144.5" r="1.2" fill="#4a5a88" opacity="0.47"/>
<circle cx="275.5" cy="426.1" r="1.2" fill="#4a5a88" opacity="0.68"/>
<circle cx="115.9" cy="96.9" r="1.2" fill="#4a5a88" opacity="0.39"/>
<circle cx="179.2" cy="240.5" r="1.2" fill="#4a5a88" opacity="0.54"/>
<circle cx="201.8" cy="16.9" r="1.2" fill="#4a5a88" opacity="0.47"/>
<circle cx="283.6" cy="278.3" r="1.2" fill="#4a5a88" opacity="0.68"/>
<circle cx="530.3" cy="254.7" r="1.2" fill="#4a5a88" opacity="0.55"/>
<circle cx="519.3" cy="40.1" r="1.2" fill="#4a5a88" opacity="0.66"/>
<circle cx="599.0" cy="421.6" r="1.2" fill="#4a5a88" opacity="0.62"/>
<circle cx="301.3" cy="200.5" r="1.2" fill="#4a5a88" opacity="0.34"/>
<circle cx="487.1" cy="43.9" r="1.2" fill="#4a5a88" opacity="0.33"/>
<circle cx="160.3" cy="90.5" r="1.2" fill="#4a5a88" opacity="0.44"/>
<circle cx="40.4" cy="15.1" r="1.2" fill="#4a5a88" opacity="0.36"/>
<circle cx="77.9" cy="184.1" r="1.2" fill="#4a5a88" opacity="0.31"/>
<circle cx="671.5" cy="300.5" r="1.2" fill="#4a5a88" opacity="0.36"/>
<circle cx="193.7" cy="176.5" r="1.2" fill="#4a5a88" opacity="0.45"/>
<circle cx="94.3" cy="409.8" r="1.2" fill="#4a5a88" opacity="0.70"/>
<circle cx="357.9" cy="240.0" r="1.2" fill="#4a5a88" opacity="0.33"/>
<circle cx="78.5" cy="174.3" r="1.2" fill="#4a5a88" opacity="0.41"/>
<circle cx="636.6" cy="90.1" r="1.2" fill="#4a5a88" opacity="0.31"/>
<circle cx="730.4" cy="260.6" r="1.2" fill="#4a5a88" opacity="0.36"/>
<circle cx="417.2" cy="27.6" r="1.2" fill="#4a5a88" opacity="0.51"/>
<circle cx="751.5" cy="416.4" r="1.2" fill="#4a5a88" opacity="0.58"/>
<circle cx="200.5" cy="185.5" r="1.2" fill="#4a5a88" opacity="0.37"/>
<circle cx="592.8" cy="262.7" r="1.2" fill="#4a5a88" opacity="0.61"/>
<circle cx="253.2" cy="118.7" r="1.2" fill="#4a5a88" opacity="0.62"/>
<circle cx="756.4" cy="411.5" r="1.2" fill="#4a5a88" opacity="0.62"/>
<circle cx="628.5" cy="359.0" r="1.2" fill="#4a5a88" opacity="0.39"/>
<circle cx="397.5" cy="180.3" r="1.2" fill="#4a5a88" opacity="0.31"/>
<circle cx="21.5" cy="144.9" r="1.2" fill="#4a5a88" opacity="0.40"/>
<circle cx="531.9" cy="459.8" r="1.2" fill="#4a5a88" opacity="0.48"/>
<circle cx="719.6" cy="474.4" r="1.2" fill="#4a5a88" opacity="0.68"/>
<circle cx="280.0" cy="117.5" r="1.2" fill="#4a5a88" opacity="0.39"/>
<circle cx="151.1" cy="110.0" r="1.2" fill="#4a5a88" opacity="0.55"/>
<circle cx="691.4" cy="405.8" r="1.2" fill="#4a5a88" opacity="0.49"/>
<circle cx="501.5" cy="386.8" r="1.2" fill="#4a5a88" opacity="0.33"/>
<circle cx="507.3" cy="438.0" r="1.2" fill="#4a5a88" opacity="0.61"/>
<circle cx="576.1" cy="237.3" r="1.2" fill="#4a5a88" opacity="0.37"/>
<circle cx="606.1" cy="169.6" r="1.2" fill="#4a5a88" opacity="0.62"/>
<circle cx="746.2" cy="199.1" r="1.2" fill="#4a5a88" opacity="0.46"/>
<circle cx="727.1" cy="352.0" r="1.2" fill="#4a5a88" opacity="0.37"/>
<circle cx="97.6" cy="85.3" r="1.2" fill="#4a5a88" opacity="0.66"/>
<circle cx="619.4" cy="83.0" r="1.2" fill="#4a5a88" opacity="0.63"/>
<circle cx="752.9" cy="320.6" r="1.2" fill="#4a5a88" opacity="0.44"/>
<circle cx="421.4" cy="75.9" r="1.2" fill="#4a5a88" opacity="0.31"/>
<circle cx="745.6" cy="317.1" r="1.2" fill="#4a5a88" opacity="0.51"/>
<circle cx="717.0" cy="216.7" r="1.2" fill="#4a5a88" opacity="0.65"/>
<circle cx="634.5" cy="113.1" r="1.2" fill="#4a5a88" opacity="0.40"/>
<circle cx="225.0" cy="126.9" r="1.2" fill="#4a5a88" opacity="0.53"/>
<circle cx="199.2" cy="209.8" r="1.2" fill="#4a5a88" opacity="0.35"/>
<circle cx="698.9" cy="179.5" r="1.2" fill="#4a5a88" opacity="0.48"/>
<circle cx="448.0" cy="435.5" r="1.2" fill="#4a5a88" opacity="0.47"/>
<circle cx="704.8" cy="248.3" r="1.2" fill="#4a5a88" opacity="0.51"/>
<circle cx="402.1" cy="23.7" r="1.2" fill="#4a5a88" opacity="0.48"/>
<circle cx="140.6" cy="16.8" r="1.2" fill="#4a5a88" opacity="0.62"/>
<circle cx="132.4" cy="235.2" r="1.2" fill="#4a5a88" opacity="0.59"/>
<circle cx="427.4" cy="166.6" r="1.2" fill="#4a5a88" opacity="0.51"/>
<circle cx="426.6" cy="379.7" r="1.2" fill="#4a5a88" opacity="0.34"/>
<circle cx="430.3" cy="130.5" r="1.2" fill="#4a5a88" opacity="0.41"/>
<circle cx="593.1" cy="251.1" r="1.2" fill="#4a5a88" opacity="0.52"/>
<circle cx="583.7" cy="439.3" r="1.2" fill="#4a5a88" opacity="0.48"/>
<circle cx="470.4" cy="250.1" r="1.2" fill="#4a5a88" opacity="0.50"/>
<circle cx="532.0" cy="225.3" r="1.2" fill="#4a5a88" opacity="0.51"/>
<circle cx="367.1" cy="452.8" r="1.2" fill="#4a5a88" opacity="0.58"/>
<circle cx="673.2" cy="453.1" r="1.2" fill="#4a5a88" opacity="0.40"/>
<circle cx="429.7" cy="453.6" r="1.2" fill="#4a5a88" opacity="0.64"/>
<circle cx="105.3" cy="71.6" r="1.2" fill="#4a5a88" opacity="0.48"/>
<circle cx="55.7" cy="126.9" r="1.2" fill="#4a5a88" opacity="0.33"/>
<circle cx="514.2" cy="379.5" r="1.2" fill="#4a5a88" opacity="0.66"/>
<circle cx="118.6" cy="348.0" r="1.2" fill="#4a5a88" opacity="0.56"/>
<circle cx="109.8" cy="425.5" r="1.2" fill="#4a5a88" opacity="0.69"/>
<circle cx="168.6" cy="457.9" r="1.2" fill="#4a5a88" opacity="0.46"/>
<circle cx="374.2" cy="475.3" r="1.2" fill="#4a5a88" opacity="0.63"/>
<circle cx="124.0" cy="215.7" r="1.2" fill="#4a5a88" opacity="0.51"/>
<circle cx="260.4" cy="106.0" r="1.2" fill="#4a5a88" opacity="0.43"/>
<circle cx="554.6" cy="24.1" r="1.2" fill="#4a5a88" opacity="0.52"/>
<circle cx="338.3" cy="23.4" r="1.2" fill="#4a5a88" opacity="0.43"/>
<circle cx="479.2" cy="253.2" r="1.2" fill="#4a5a88" opacity="0.33"/>
<circle cx="756.5" cy="381.6" r="1.2" fill="#4a5a88" opacity="0.69"/>
<circle cx="80.5" cy="138.5" r="1.2" fill="#4a5a88" opacity="0.32"/>
<circle cx="598.3" cy="140.8" r="1.2" fill="#4a5a88" opacity="0.35"/>
<circle cx="324.3" cy="438.8" r="1.2" fill="#4a5a88" opacity="0.63"/>
<circle cx="198.6" cy="84.5" r="1.2" fill="#4a5a88" opacity="0.67"/>
<circle cx="438.2" cy="340.7" r="1.2" fill="#4a5a88" opacity="0.34"/>
<circle cx="44.2" cy="335.0" r="1.2" fill="#4a5a88" opacity="0.47"/>
<circle cx="55.6" cy="451.3" r="1.2" fill="#4a5a88" opacity="0.55"/>
<circle cx="615.7" cy="53.9" r="1.2" fill="#4a5a88" opacity="0.64"/>
<circle cx="51.2" cy="416.2" r="1.2" fill="#4a5a88" opacity="0.48"/>
<circle cx="260.5" cy="272.2" r="1.2" fill="#4a5a88" opacity="0.67"/>
<circle cx="205.7" cy="75.1" r="1.2" fill="#4a5a88" opacity="0.51"/>
<circle cx="183.1" cy="65.9" r="1.2" fill="#4a5a88" opacity="0.36"/>
<circle cx="38.7" cy="108.8" r="1.2" fill="#4a5a88" opacity="0.42"/>
<circle cx="234.2" cy="368.2" r="1.2" fill="#4a5a88" opacity="0.42"/>
<circle cx="384.1" cy="97.7" r="1.2" fill="#4a5a88" opacity="0.44"/>
<circle cx="13.9" cy="131.5" r="1.2" fill="#4a5a88" opacity="0.31"/>
<circle cx="563.0" cy="271.2" r="1.2" fill="#4a5a88" opacity="0.38"/>
<circle cx="364.6" cy="449.6" r="1.2" fill="#4a5a88" opacity="0.34"/>
<circle cx="628.9" cy="216.0" r="1.2" fill="#4a5a88" opacity="0.50"/>
<circle cx="641.0" cy="197.8" r="1.2" fill="#4a5a88" opacity="0.50"/>
<circle cx="528.2" cy="471.8" r="1.2" fill="#4a5a88" opacity="0.44"/>
<circle cx="639.2" cy="343.6" r="1.2" fill="#4a5a88" opacity="0.55"/>
<circle cx="310.8" cy="176.6" r="1.2" fill="#4a5a88" opacity="0.32"/>
<circle cx="99.7" cy="47.9" r="1.2" fill="#4a5a88" opacity="0.60"/>
<circle cx="196.3" cy="90.9" r="1.2" fill="#4a5a88" opacity="0.33"/>
<circle cx="646.1" cy="419.8" r="1.2" fill="#4a5a88" opacity="0.57"/>
<circle cx="216.5" cy="127.6" r="1.2" fill="#4a5a88" opacity="0.42"/>
<circle cx="352.9" cy="88.3" r="1.2" fill="#4a5a88" opacity="0.48"/>
<circle cx="202.2" cy="462.2" r="1.2" fill="#4a5a88" opacity="0.69"/>
<circle cx="420.2" cy="128.7" r="1.2" fill="#4a5a88" opacity="0.69"/>
<circle cx="237.7" cy="180.8" r="1.2" fill="#4a5a88" opacity="0.30"/>
<circle cx="293.1" cy="235.7" r="1.2" fill="#4a5a88" opacity="0.50"/>
<circle cx="154.4" cy="249.7" r="1.2" fill="#4a5a88" opacity="0.30"/>
<circle cx="202.9" cy="56.7" r="1.2" fill="#4a5a88" opacity="0.46"/>
<circle cx="32.0" cy="25.5" r="1.2" fill="#4a5a88" opacity="0.42"/>
<circle cx="178.8" cy="287.3" r="1.2" fill="#4a5a88" opacity="0.51"/>
<circle cx="576.4" cy="320.8" r="1.2" fill="#4a5a88" opacity="0.59"/>
<circle cx="675.1" cy="196.1" r="1.2" fill="#4a5a88" opacity="0.43"/>
<circle cx="756.3" cy="84.5" r="1.2" fill="#4a5a88" opacity="0.59"/>
<circle cx="494.0" cy="35.4" r="1.2" fill="#4a5a88" opacity="0.63"/>
<circle cx="685.0" cy="306.7" r="1.2" fill="#4a5a88" opacity="0.59"/>
<circle cx="623.8" cy="79.8" r="1.2" fill="#4a5a88" opacity="0.51"/>
<circle cx="387.4" cy="403.2" r="1.2" fill="#4a5a88" opacity="0.62"/>
<circle cx="634.7" cy="286.6" r="1.2" fill="#4a5a88" opacity="0.66"/>
<circle cx="524.5" cy="337.4" r="1.2" fill="#4a5a88" opacity="0.39"/>
<circle cx="23.9" cy="76.9" r="1.2" fill="#4a5a88" opacity="0.44"/>
<circle cx="80.6" cy="403.7" r="1.2" fill="#4a5a88" opacity="0.52"/>
<circle cx="482.1" cy="306.2" r="1.2" fill="#4a5a88" opacity="0.57"/>
<circle cx="375.8" cy="16.5" r="1.2" fill="#4a5a88" opacity="0.62"/>
<circle cx="574.7" cy="248.9" r="1.2" fill="#4a5a88" opacity="0.51"/>
<circle cx="506.3" cy="45.7" r="1.2" fill="#4a5a88" opacity="0.59"/>
<circle cx="193.7" cy="49.6" r="1.2" fill="#4a5a88" opacity="0.41"/>
<circle cx="560.1" cy="110.4" r="1.2" fill="#4a5a88" opacity="0.60"/>
<circle cx="749.4" cy="244.7" r="1.2" fill="#4a5a88" opacity="0.45"/>
<circle cx="367.9" cy="332.9" r="1.2" fill="#4a5a88" opacity="0.61"/>
<circle cx="473.8" cy="313.9" r="1.2" fill="#4a5a88" opacity="0.33"/>
<circle cx="113.2" cy="133.1" r="1.2" fill="#4a5a88" opacity="0.60"/>
<circle cx="233.8" cy="279.0" r="1.2" fill="#4a5a88" opacity="0.30"/>
<circle cx="46.6" cy="140.0" r="1.2" fill="#4a5a88" opacity="0.57"/>
<circle cx="531.6" cy="329.2" r="1.2" fill="#4a5a88" opacity="0.42"/>
<circle cx="396.7" cy="231.1" r="1.2" fill="#4a5a88" opacity="0.49"/>
<circle cx="91.0" cy="430.6" r="1.2" fill="#4a5a88" opacity="0.38"/>
<circle cx="751.2" cy="450.4" r="1.2" fill="#4a5a88" opacity="0.31"/>
<circle cx="352.5" cy="396.3" r="1.2" fill="#4a5a88" opacity="0.69"/>
<circle cx="345.2" cy="139.9" r="1.2" fill="#4a5a88" opacity="0.38"/>
<circle cx="726.2" cy="113.0" r="1.2" fill="#4a5a88" opacity="0.53"/>
<circle cx="108.9" cy="258.7" r="1.2" fill="#4a5a88" opacity="0.68"/>
<circle cx="101.8" cy="396.4" r="1.2" fill="#4a5a88" opacity="0.50"/>
<circle cx="681.1" cy="342.1" r="1.2" fill="#4a5a88" opacity="0.39"/>
<circle cx="689.4" cy="241.1" r="1.2" fill="#4a5a88" opacity="0.31"/>
<circle cx="2.8" cy="243.6" r="1.2" fill="#4a5a88" opacity="0.48"/>
<circle cx="231.9" cy="80.4" r="1.2" fill="#4a5a88" opacity="0.44"/>
<circle cx="242.7" cy="405.7" r="1.2" fill="#4a5a88" opacity="0.30"/>
<circle cx="576.6" cy="405.2" r="1.2" fill="#4a5a88" opacity="0.35"/>
<circle cx="711.5" cy="346.6" r="1.2" fill="#4a5a88" opacity="0.66"/>
<circle cx="222.6" cy="188.1" r="1.2" fill="#4a5a88" opacity="0.46"/>
<circle cx="767.1" cy="289.0" r="1.2" fill="#4a5a88" opacity="0.44"/>
<circle cx="328.7" cy="142.9" r="1.2" fill="#4a5a88" opacity="0.32"/>
<circle cx="78.1" cy="403.1" r="1.2" fill="#4a5a88" opacity="0.41"/>
<circle cx="718.5" cy="130.9" r="1.2" fill="#4a5a88" opacity="0.41"/>
<circle cx="392.4" cy="103.3" r="1.2" fill="#4a5a88" opacity="0.45"/>
<circle cx="734.3" cy="426.2" r="1.2" fill="#4a5a88" opacity="0.62"/>
<circle cx="484.5" cy="439.7" r="1.2" fill="#4a5a88" opacity="0.68"/>
<circle cx="421.8" cy="349.6" r="1.2" fill="#4a5a88" opacity="0.32"/>
<circle cx="562.4" cy="224.7" r="1.2" fill="#4a5a88" opacity="0.60"/>
<circle cx="495.0" cy="148.1" r="1.2" fill="#4a5a88" opacity="0.32"/>
<circle cx="711.8" cy="74.2" r="1.2" fill="#4a5a88" opacity="0.49"/>
<circle cx="263.9" cy="153.5" r="1.2" fill="#4a5a88" opacity="0.60"/>
<circle cx="749.8" cy="136.0" r="1.2" fill="#4a5a88" opacity="0.56"/>
<circle cx="231.0" cy="274.2" r="1.2" fill="#4a5a88" opacity="0.46"/>
<circle cx="128.5" cy="90.2" r="1.2" fill="#4a5a88" opacity="0.38"/>
<circle cx="695.8" cy="246.1" r="1.2" fill="#4a5a88" opacity="0.39"/>
<circle cx="696.0" cy="478.4" r="1.2" fill="#4a5a88" opacity="0.48"/>
<circle cx="107.2" cy="104.5" r="1.2" fill="#4a5a88" opacity="0.34"/>
<circle cx="262.6" cy="57.4" r="1.2" fill="#4a5a88" opacity="0.40"/>
<circle cx="198.4" cy="279.9" r="1.2" fill="#4a5a88" opacity="0.65"/>
<circle cx="575.7" cy="206.9" r="1.2" fill="#4a5a88" opacity="0.47"/>
<circle cx="402.6" cy="190.2" r="1.2" fill="#4a5a88" opacity="0.44"/>
<circle cx="47.7" cy="144.0" r="1.2" fill="#4a5a88" opacity="0.69"/>
<circle cx="96.7" cy="249.1" r="1.2" fill="#4a5a88" opacity="0.55"/>
<circle cx="662.7" cy="115.4" r="1.2" fill="#4a5a88" opacity="0.41"/>
<circle cx="190.8" cy="200.9" r="1.2" fill="#4a5a88" opacity="0.48"/>
<circle cx="732.6" cy="409.6" r="1.2" fill="#4a5a88" opacity="0.65"/>
<circle cx="16.8" cy="30.0" r="1.2" fill="#4a5a88" opacity="0.58"/>
<circle cx="687.9" cy="235.1" r="1.2" fill="#4a5a88" opacity="0.53"/>
<circle cx="0.1" cy="197.1" r="1.2" fill="#4a5a88" opacity="0.67"/>
<circle cx="634.1" cy="412.8" r="1.2" fill="#4a5a88" opacity="0.69"/>
<circle cx="190.8" cy="65.7" r="1.2" fill="#4a5a88" opacity="0.36"/>
<circle cx="401.2" cy="332.2" r="1.2" fill="#4a5a88" opacity="0.68"/>
<circle cx="554.3" cy="316.0" r="1.2" fill="#4a5a88" opacity="0.61"/>
<circle cx="351.2" cy="271.4" r="1.2" fill="#4a5a88" opacity="0.32"/>
<circle cx="600.8" cy="123.1" r="1.2" fill="#4a5a88" opacity="0.67"/>
<circle cx="495.7" cy="156.3" r="1.2" fill="#4a5a88" opacity="0.35"/>
<circle cx="193.4" cy="310.9" r="1.2" fill="#4a5a88" opacity="0.58"/>
<circle cx="86.1" cy="47.7" r="1.2" fill="#4a5a88" opacity="0.51"/>
<circle cx="447.7" cy="195.5" r="1.2" fill="#4a5a88" opacity="0.39"/>
<circle cx="461.6" cy="19.9" r="1.2" fill="#4a5a88" opacity="0.42"/>
<circle cx="353.8" cy="460.9" r="1.2" fill="#4a5a88" opacity="0.56"/>
<circle cx="678.7" cy="236.0" r="1.2" fill="#4a5a88" opacity="0.39"/>
<circle cx="189.7" cy="461.7" r="1.2" fill="#4a5a88" opacity="0.58"/>
<circle cx="236.1" cy="25.1" r="1.2" fill="#4a5a88" opacity="0.50"/>
<circle cx="518.0" cy="210.3" r="1.2" fill="#4a5a88" opacity="0.40"/>
<circle cx="512.5" cy="445.2" r="1.2" fill="#4a5a88" opacity="0.39"/>
<circle cx="26.2" cy="172.2" r="1.2" fill="#4a5a88" opacity="0.47"/>
<circle cx="524.2" cy="107.1" r="1.2" fill="#4a5a88" opacity="0.62"/>
<circle cx="567.7" cy="249.8" r="1.2" fill="#4a5a88" opacity="0.38"/>
<circle cx="744.9" cy="159.9" r="1.2" fill="#4a5a88" opacity="0.63"/>
<circle cx="177.3" cy="118.0" r="1.2" fill="#4a5a88" opacity="0.60"/>
<circle cx="226.5" cy="457.6" r="1.2" fill="#4a5a88" opacity="0.50"/>
<circle cx="143.9" cy="118.8" r="1.2" fill="#4a5a88" opacity="0.47"/>
<circle cx="510.9" cy="456.2" r="1.2" fill="#4a5a88" opacity="0.36"/>
<circle cx="302.2" cy="114.0" r="1.2" fill="#4a5a88" opacity="0.69"/>
<circle cx="109.0" cy="39.1" r="1.2" fill="#4a5a88" opacity="0.32"/>
<circle cx="302.1" cy="432.6" r="1.2" fill="#4a5a88" opacity="0.65"/>
<circle cx="562.7" cy="478.9" r="1.2" fill="#4a5a88" opacity="0.67"/>
<circle cx="252.9" cy="101.3" r="1.2" fill="#4a5a88" opacity="0.67"/>
<circle cx="573.2" cy="29.8" r="1.2" fill="#4a5a88" opacity="0.57"/>
<circle cx="290.8" cy="188.9" r="1.2" fill="#4a5a88" opacity="0.43"/>
<circle cx="130.0" cy="16.3" r="1.2" fill="#4a5a88" opacity="0.41"/>
<circle cx="269.9" cy="459.3" r="1.2" fill="#4a5a88" opacity="0.35"/>
<circle cx="740.6" cy="111.4" r="1.2" fill="#4a5a88" opacity="0.44"/>
<circle cx="631.0" cy="397.2" r="1.2" fill="#4a5a88" opacity="0.47"/>
<circle cx="37.8" cy="235.2" r="1.2" fill="#4a5a88" opacity="0.45"/>
<circle cx="706.2" cy="104.8" r="1.2" fill="#4a5a88" opacity="0.45"/>
<circle cx="688.9" cy="29.1" r="1.2" fill="#4a5a88" opacity="0.46"/>
<circle cx="623.5" cy="371.5" r="1.2" fill="#4a5a88" opacity="0.32"/>
<circle cx="26.8" cy="44.1" r="1.2" fill="#4a5a88" opacity="0.67"/>
<circle cx="197.4" cy="362.5" r="1.2" fill="#4a5a88" opacity="0.66"/>
<circle cx="260.4" cy="141.6" r="1.2" fill="#4a5a88" opacity="0.68"/>
<circle cx="473.8" cy="136.9" r="1.2" fill="#4a5a88" opacity="0.59"/>
<circle cx="243.1" cy="143.2" r="1.2" fill="#4a5a88" opacity="0.30"/>
<circle cx="580.3" cy="441.2" r="1.2" fill="#4a5a88" opacity="0.55"/>
<circle cx="724.4" cy="26.3" r="1.2" fill="#4a5a88" opacity="0.39"/>
<circle cx="364.9" cy="459.9" r="1.2" fill="#4a5a88" opacity="0.68"/>
<circle cx="296.8" cy="131.7" r="1.2" fill="#4a5a88" opacity="0.47"/>
<circle cx="379.0" cy="446.6" r="1.2" fill="#4a5a88" opacity="0.37"/>
<circle cx="616.4" cy="358.4" r="1.2" fill="#4a5a88" opacity="0.63"/>
<circle cx="593.5" cy="297.4" r="1.2" fill="#4a5a88" opacity="0.43"/>
<circle cx="245.4" cy="183.3" r="1.2" fill="#4a5a88" opacity="0.61"/>
<circle cx="60.7" cy="106.7" r="1.2" fill="#4a5a88" opacity="0.60"/>
<circle cx="189.9" cy="45.1" r="1.2" fill="#4a5a88" opacity="0.31"/>
<circle cx="424.4" cy="166.5" r="1.2" fill="#4a5a88" opacity="0.69"/>
<circle cx="678.5" cy="474.3" r="1.2" fill="#4a5a88" opacity="0.41"/>
<circle cx="64.6" cy="59.8" r="1.2" fill="#4a5a88" opacity="0.50"/>
<circle cx="545.1" cy="222.8" r="1.2" fill="#4a5a88" opacity="0.39"/>
<circle cx="320.1" cy="303.4" r="1.2" fill="#4a5a88" opacity="0.57"/>
<circle cx="574.4" cy="408.8" r="1.2" fill="#4a5a88" opacity="0.57"/>
<circle cx="93.1" cy="406.0" r="1.2" fill="#4a5a88" opacity="0.42"/>
<circle cx="435.4" cy="188.4" r="1.2" fill="#4a5a88" opacity="0.60"/>
<circle cx="153.0" cy="130.1" r="1.2" fill="#4a5a88" opacity="0.40"/>
<circle cx="117.8" cy="426.1" r="1.2" fill="#4a5a88" opacity="0.53"/>
<circle cx="250.6" cy="199.2" r="1.2" fill="#4a5a88" opacity="0.70"/>
<circle cx="389.6" cy="122.6" r="1.2" fill="#4a5a88" opacity="0.62"/>
<circle cx="501.8" cy="475.8" r="1.2" fill="#4a5a88" opacity="0.34"/>
<circle cx="364.6" cy="395.9" r="1.2" fill="#4a5a88" opacity="0.64"/>
<circle cx="702.2" cy="33.8" r="1.2" fill="#4a5a88" opacity="0.42"/>
<circle cx="91.6" cy="103.2" r="1.2" fill="#4a5a88" opacity="0.69"/>
<circle cx="447.9" cy="447.5" r="1.2" fill="#4a5a88" opacity="0.45"/>
<circle cx="665.2" cy="223.8" r="1.2" fill="#4a5a88" opacity="0.40"/>
<circle cx="597.3" cy="454.8" r="1.2" fill="#4a5a88" opacity="0.34"/>
<circle cx="457.8" cy="303.3" r="1.2" fill="#4a5a88" opacity="0.39"/>
<circle cx="283.2" cy="80.7" r="1.2" fill="#4a5a88" opacity="0.38"/>
<circle cx="195.8" cy="293.7" r="1.2" fill="#4a5a88" opacity="0.56"/>
<circle cx="156.2" cy="20.3" r="1.2" fill="#4a5a88" opacity="0.43"/>
<circle cx="520.9" cy="101.1" r="1.2" fill="#4a5a88" opacity="0.42"/>
<circle cx="156.2" cy="384.8" r="1.2" fill="#4a5a88" opacity="0.52"/>
<circle cx="48.6" cy="62.1" r="1.2" fill="#4a5a88" opacity="0.46"/>
<circle cx="422.5" cy="312.2" r="1.2" fill="#4a5a88" opacity="0.34"/>
<circle cx="125.7" cy="338.4" r="1.2" fill="#4a5a88" opacity="0.46"/>
<circle cx="217.6" cy="158.0" r="1.2" fill="#4a5a88" opacity="0.68"/>
</svg>

<!-- status bar -->
<div class="a" style="left:0;top:0;width:768px;height:15px;background:#000"></div>
<svg class="a" style="left:0;top:0" width="120" height="15" viewBox="0 0 120 15">
  <g fill="none" stroke="#d8d8d8">
    <rect x="4.5" y="2.8" width="8" height="9.4" stroke-width="1.1"/>
  </g>
  <path d="M6 9.8 L6 8.3 L7.3 7.5 L8.3 8.3 L10.5 6.3 L10.8 9.8 Z" fill="#d8d8d8"/>
  <path d="M18.2 4 L23.8 3.1 L23.8 11.7 L18.2 10.8 Z" fill="#d0d0d0"/>
  <rect x="23.8" y="4.9" width="4.2" height="5" fill="#c8c8c8"/>
  <ellipse cx="20.8" cy="7.4" rx="1.3" ry="1.8" fill="none" stroke="#333" stroke-width="1"/>
  <path d="M24 7 L27.5 7" stroke="#444" stroke-width="0.8"/>
  <path d="M34 3.3 L43 3.3 L41 11.7 L32 11.7 Z" fill="#d0d0d0"/>
  <path d="M35.5 5 L40 5 L35 10 L39.5 10" stroke="#222" stroke-width="1.2" fill="none"/>
  <path d="M48 4 Q50 2 52 3.5 Q54 2.5 56 3 L55.5 5 L53 5 L53 11 Q55 11 56 9 Q55.5 12.5 52 12.5 Q48 12.5 48 8.5 Q48 6 50.5 5.5 L50.5 4.5 Q49 4 48 5 Z" fill="#d4d4d4"/>
  <path d="M66.3 3.2 L71.3 12 L61.3 12 Z" fill="#d8d8d8"/>
  <rect x="65.8" y="6" width="1" height="3.3" fill="#222"/><rect x="65.8" y="10" width="1" height="1" fill="#222"/>
  <circle cx="80.8" cy="7.3" r="5.2" fill="#d8d8d8"/>
  <path d="M79.5 12 L80.5 13.5 L82 12 Z" fill="#d8d8d8"/>
  <rect x="78.8" y="4.3" width="4" height="6" rx="0.8" fill="none" stroke="#333" stroke-width="1.1"/>
  <circle cx="95" cy="7.5" r="5.8" fill="#cccccc"/>
  <rect x="90.5" y="7" width="9" height="1.2" fill="#444"/>
  <path d="M105 3 L114 7.5 L105 12 L106.5 7.5 Z" fill="#cfcfcf"/>
</svg>
<svg class="a" style="left:680px;top:0" width="44" height="15" viewBox="0 0 44 15">
  <path d="M4.5 5 L9.3 9 L7 11.2 L7 3.3 L9.3 5.5 L4.5 9.5" stroke="#c8c8c8" stroke-width="1.2" fill="none"/>
  <path d="M15.6 4 L15.6 11.5" stroke="#b0b0b0" stroke-width="1.4" stroke-dasharray="1 0.6"/>
  <path d="M17.5 4.3 L26.5 10.8 L26.5 4.3 L17.5 10.8 Z" fill="#c8c8c8" stroke="#c8c8c8" stroke-width="0.6"/>
  <path d="M28 4.5 L28 11" stroke="#c0c0c0" stroke-width="1.3"/>
  <rect x="35" y="2.5" width="6" height="10" fill="#e4c8c0"/>
  <path d="M37 4 L39.5 4 L38.8 7 L40 7 L37.8 11 L38.2 8 L36.8 8 Z" fill="#8a2818"/>
</svg>
<div class="t" style="left:725px;top:3px;font-size:10.5px;color:#c4c4c4">3:20 AM</div>

<!-- hamburger -->
<svg class="a" style="left:742px;top:19px" width="20" height="16" viewBox="0 0 20 16">
  <g stroke="#000" stroke-width="2.6" opacity="0.6"><path d="M2 2.7 H18 M2 6.1 H18 M2 9.7 H18 M2 13.3 H18"/></g>
  <g stroke="#eef2f6" stroke-width="1.3"><path d="M2 2.7 H18 M2 6.1 H18 M2 9.7 H18 M2 13.3 H18"/></g>
</svg>
<!-- desktop icon -->
<svg class="a" style="left:17px;top:52px" width="20" height="23" viewBox="0 0 20 23">
  <defs><linearGradient id="mon" x1="0" y1="0" x2="1" y2="1"><stop offset="0" stop-color="#b8d8f0"/><stop offset="1" stop-color="#4a88c8"/></linearGradient></defs>
  <rect x="1" y="3" width="4" height="11.3" fill="#d8dce0"/>
  <rect x="5.1" y="1" width="13.8" height="11.1" fill="#a8c4dc"/>
  <rect x="5.8" y="1.6" width="12.4" height="9.9" fill="url(#mon)"/>
  <path d="M8.2 3.8 L11 6.8 L14.5 3.8 L12.3 8.2 L12.8 10.2 L10.6 10.2 L10.8 8 Z" fill="#2a5aa0" opacity="0.85"/>
  <rect x="11" y="12.1" width="2" height="1.5" fill="#c0c8d0"/>
  <path d="M8 13.5 L16 13.5 L17 15.3 L7.5 15.3 Z" fill="#e0e4e8"/>
  <rect x="1" y="15" width="7" height="6.8" fill="#f2f2f2"/>
  <path d="M2.8 20.5 Q3.5 17 6.5 16.5" stroke="#333" stroke-width="1.4" fill="none"/>
</svg>
<div class="t" style="left:10px;top:77px;font-size:7px;color:#e0e0e0">Windows 10</div>
<div class="t" style="left:16.5px;top:86px;font-size:7px;color:#e0e0e0">Desktop</div>

<!-- dock -->
<svg class="a" style="left:285px;top:438px" width="185" height="36" viewBox="0 0 185 36">
  <path d="M2.5 5 L12 5 L15 7.5 L33.5 7.5 L33.5 30 L2.5 30 Z" fill="#f0cc68"/>
  <path d="M2.5 9.5 L33.5 9.5 L33.5 30 L2.5 30 Z" fill="#fadb84"/>
  <path d="M4 6.5 L10 6.5" stroke="#fff3c8" stroke-width="1"/>
  <path d="M7.5 30 L7.5 19 Q7.5 18 8.5 18 L27.5 18 Q28.5 18 28.5 19 L28.5 30 L24 30 L24 23 L12 23 L12 30 Z" fill="#3aace8"/>
  <rect x="13" y="24" width="10" height="6" fill="#f6d680"/>
  <rect x="54.2" y="4.4" width="26.8" height="26.6" fill="#1e78d0"/>
  <rect x="56.5" y="6.7" width="22.2" height="22" fill="#ffffff"/>
  <rect x="57.5" y="7.7" width="20.2" height="12" fill="#1e78d0"/>
  <path d="M57.5 19 L65 10.5 L70.5 17 L73 14.5 L77.7 20.5 L77.7 27.7 L57.5 27.7 Z" fill="#ffffff"/>
  <path d="M65 10.5 L70.5 17 L74.5 24" stroke="#1e78d0" stroke-width="0.8" fill="none"/>
  <path d="M116.5 3 L119.5 3 Q120 7 124 10.5 Q128 14 127 19.5 Q126.5 22 125 24 Q126 19 123.5 16 Q121.5 14 119.5 13.5 L119.5 28 Q119.5 32.5 114 33 Q108 33.5 107.5 30 Q107.5 26.5 112 25 Q114.5 24.3 116.5 25 Z" fill="#2a98e6"/>
  <path d="M152.5 10 L176 4 L177 8 L153.5 14 Z" fill="#e8e8e8"/>
  <path d="M155 9.5 L157 13 M159.5 8.3 L161.5 11.8 M164 7.2 L166 10.7 M168.5 6 L170.5 9.5 M173 4.8 L175 8.3" stroke="#333" stroke-width="1.6"/>
  <rect x="152.5" y="13.5" width="25" height="3.5" fill="#e8e8e8"/>
  <path d="M155 13.5 L156.5 17 M160 13.5 L161.5 17 M165 13.5 L166.5 17 M170 13.5 L171.5 17 M175 13.5 L176.5 17" stroke="#333" stroke-width="1.6"/>
  <rect x="153" y="17" width="24" height="13.5" fill="#5aaaf0"/>
  <path d="M153 26 L177 20 L177 30.5 L153 30.5 Z" fill="#7cc0f8"/>
</svg>

<!-- This PC window -->
<div class="win" style="left:108px;top:60px;width:385px;height:337px">
  <!-- title icon -->
  <svg class="a" style="left:3px;top:3px" width="14" height="12" viewBox="0 0 14 12">
    <path d="M1.8 0.6 L10.5 2.3 L10.5 7.8 L1.8 6.8 Z" fill="#2f9ee0"/>
    <path d="M0.3 7.4 L7.8 8 L9.2 9.4 L1.5 9.4 Z" fill="#c8d4dc"/>
  </svg>
  <div class="t" style="left:20px;top:5px;font-size:9px;color:#000">This PC</div>
  <div class="sep" style="left:0;top:17px;width:385px;background:#e2e2e2"></div>
  <div class="a" style="left:329px;top:8px;width:10px;height:1.5px;background:#222"></div>
  <div class="a" style="left:349px;top:4px;width:9px;height:8px;border:1px solid #555"></div>
  <svg class="a" style="left:368px;top:4px" width="11" height="10" viewBox="0 0 11 10"><path d="M1.4 0.6 L9.7 8.2 M9.7 0.6 L1.4 8.2" stroke="#333" stroke-width="1"/></svg>
  <!-- ribbon button -->
  <div class="a" style="left:3px;top:18px;width:33px;height:43px;background:#f6f7fb"></div>
  <svg class="a" style="left:15.5px;top:19.5px" width="18" height="20" viewBox="0 0 18 20">
    <path d="M0.5 0.5 L5 0.5 L5 18.5 L0.5 18.5 Z" fill="#f0d890"/>
    <path d="M4.5 1 L7 2 L7 18 L4.5 18.5 Z" fill="#8a6a28"/>
    <path d="M6.8 2 L14 2.5 L14 19 L6.8 18.5 Z" fill="#e8c870"/>
    <path d="M14 12 L17.5 17 L14 19.5 Z" fill="#dcd8cc"/>
  </svg>
  <div class="t" style="left:12.5px;top:44px;font-size:7px;color:#333">Create</div>
  <div class="t" style="left:12.5px;top:52.5px;font-size:7px;color:#333">Folder</div>
  <!-- nav arrows -->
  <svg class="a" style="left:5px;top:65px" width="60" height="12" viewBox="0 0 60 12">
    <path d="M1.5 6 L11.5 6 M1.5 6 L5.5 2 M1.5 6 L5.5 10" stroke="#2a2a2a" stroke-width="1.1" fill="none"/>
    <path d="M21 6 L31 6 M31 6 L27 2 M31 6 L27 10" stroke="#2a2a2a" stroke-width="1.1" fill="none"/>
    <path d="M45.5 1.5 L45.5 11 M45.5 1.5 L41.5 5.5 M45.5 1.5 L49.5 5.5" stroke="#2a2a2a" stroke-width="1.1" fill="none"/>
  </svg>
  <div class="t" style="left:63.5px;top:66.5px;font-size:8px;color:#000">This PC</div>
  <div class="a" style="left:62px;top:78px;width:323px;height:1px;background:#ececec"></div>
  <!-- nav tree -->
  <svg class="a" style="left:9px;top:90px" width="8" height="100" viewBox="0 0 8 100">
    <path d="M1.5 3.5 L4.5 6.5 L1.5 9.5" stroke="#8a8a8a" stroke-width="1.3" fill="none"/>
  </svg>
  <svg class="a" style="left:21px;top:90px" width="12" height="12" viewBox="0 0 12 12">
    <path d="M6 0.5 L7.6 4 L11.5 4.3 L8.5 7 L9.5 11 L6 9 L2.5 11 L3.5 7 L0.5 4.3 L4.4 4 Z" fill="#35a4e8"/>
  </svg>
  <div class="t" style="left:37.5px;top:92px;font-size:9.5px;color:#000">Quick access</div>
  <div class="a" style="left:8px;top:107.5px;width:87px;height:17.5px;background:#dcebf9"></div>
  <svg class="a" style="left:9px;top:109px" width="8" height="8" viewBox="0 0 8 8">
    <path d="M1 3.5 L4 6.5 L7 3.5" stroke="#222" stroke-width="1.4" fill="none"/>
  </svg>
  <svg class="a" style="left:22px;top:107px" width="13" height="13" viewBox="0 0 13 13">
    <path d="M2 1 L11 3 L11 9 L2 8 Z" fill="#3aa0e0"/>
    <path d="M1 10 L9 10 L12 12 L3 12 Z" fill="#c8d0d8"/>
  </svg>
  <div class="t" style="left:37.5px;top:110px;font-size:9.5px;color:#000">This PC</div>
  <svg class="a" style="left:19px;top:127px" width="6" height="60" viewBox="0 0 6 60">
    <path d="M1 1.5 L4 4.5 L1 7.5" stroke="#8a8a8a" stroke-width="1.3" fill="none"/>
    <path d="M1 19.5 L4 22.5 L1 25.5" stroke="#8a8a8a" stroke-width="1.3" fill="none"/>
    <path d="M1 37.5 L4 40.5 L1 43.5" stroke="#8a8a8a" stroke-width="1.3" fill="none"/>
  </svg>
  <svg class="a" style="left:32px;top:127.5px" width="10" height="10" viewBox="0 0 10 10">
    <rect x="0.5" y="0.5" width="3.5" height="8" fill="#f2dc98"/><rect x="3.6" y="1" width="1.6" height="7.5" fill="#8a6a28"/><rect x="5.2" y="1.5" width="3" height="7" fill="#ecd080"/><rect x="3.5" y="8.3" width="5.5" height="1" fill="#d6cdb8"/>
  </svg>
  <div class="t" style="left:46.5px;top:128px;font-size:9.5px;color:#000">System</div>
  <svg class="a" style="left:32px;top:145.5px" width="10" height="10" viewBox="0 0 10 10">
    <rect x="0.5" y="0.5" width="3.5" height="8" fill="#f2dc98"/><rect x="3.6" y="1" width="1.6" height="7.5" fill="#8a6a28"/><rect x="5.2" y="1.5" width="3" height="7" fill="#ecd080"/><rect x="3.5" y="8.3" width="5.5" height="1" fill="#d6cdb8"/>
  </svg>
  <div class="t" style="left:46.5px;top:146px;font-size:9.5px;color:#000">Internal</div>
  <svg class="a" style="left:31px;top:162px" width="10" height="11" viewBox="0 0 10 11">
    <rect x="1" y="0.5" width="8" height="10.5" fill="#1c1c1c"/><rect x="1" y="7" width="8" height="2.5" fill="#8a7038"/><rect x="1" y="9.5" width="8" height="1.5" fill="#d8d0b0"/>
  </svg>
  <div class="t" style="left:46.5px;top:164px;font-size:9.5px;color:#000">SD Card</div>
  <!-- headers -->
  <div class="a" style="left:109px;top:81px;width:131px;height:14px;background:linear-gradient(#ececec,#d9d9d9)"></div>
  <div class="a" style="left:244px;top:81px;width:86px;height:14px;background:linear-gradient(#ececec,#d9d9d9)"></div>
  <div class="a" style="left:334px;top:81px;width:51px;height:14px;background:linear-gradient(#ececec,#d9d9d9)"></div>
  <div class="t" style="left:114px;top:86.3px;font-size:8.2px;color:#000">Name</div>
  <div class="t" style="left:248.5px;top:86.2px;font-size:8.4px;color:#000">Date Modified</div>
  <div class="t" style="left:338.5px;top:86px;font-size:8.4px;color:#000">Type</div>
  <!-- rows -->
  <div class="a" style="left:109px;top:97.5px;width:7px;height:7px;border:1px solid #333"></div>
  <div class="a" style="left:109px;top:112.5px;width:7px;height:7px;border:1px solid #333"></div>
  <div class="a" style="left:109px;top:127.5px;width:7px;height:7px;border:1px solid #333"></div>
  <svg class="a" style="left:123px;top:97px" width="10" height="40" viewBox="0 0 10 40">
<g transform="translate(0.5,0)"><rect x="0.5" y="0.5" width="3.5" height="8" fill="#f2dc98"/><rect x="3.6" y="1" width="1.6" height="7.5" fill="#8a6a28"/><rect x="5.2" y="1.5" width="3" height="7" fill="#ecd080"/><rect x="3.5" y="8.3" width="5.5" height="1" fill="#d6cdb8"/></g><g transform="translate(0.5,15)"><rect x="0.5" y="0.5" width="3.5" height="8" fill="#f2dc98"/><rect x="3.6" y="1" width="1.6" height="7.5" fill="#8a6a28"/><rect x="5.2" y="1.5" width="3" height="7" fill="#ecd080"/><rect x="3.5" y="8.3" width="5.5" height="1" fill="#d6cdb8"/></g><g transform="translate(0.5,30)"><rect x="0.5" y="0.5" width="3.5" height="8" fill="#f2dc98"/><rect x="3.6" y="1" width="1.6" height="7.5" fill="#8a6a28"/><rect x="5.2" y="1.5" width="3" height="7" fill="#ecd080"/><rect x="3.5" y="8.3" width="5.5" height="1" fill="#d6cdb8"/></g>
  </svg>
  <div class="t" style="left:134.5px;top:96.9px;font-size:9.5px;color:#000">system</div>
  <div class="t" style="left:134.5px;top:111.9px;font-size:9.5px;color:#000">Internal</div>
  <div class="t" style="left:134.5px;top:126.9px;font-size:9.5px;color:#000">SD Card</div>
  <div class="t" style="left:254.5px;top:98px;font-size:10px;color:#000">8/31/2017 4:37 AM</div>
  <div class="t" style="left:254.5px;top:113px;font-size:10px;color:#000">11/20/2017 9:15 AM</div>
  <div class="t" style="left:254.5px;top:128px;font-size:10px;color:#000">11/26/2017 10:42...</div>
  <div class="t" style="left:344.5px;top:98px;font-size:10px;color:#000">File Folder</div>
  <div class="t" style="left:344.5px;top:113px;font-size:10px;color:#000">File Folder</div>
  <div class="t" style="left:344.5px;top:128px;font-size:10px;color:#000">File Folder</div>
  <div class="foot" style="left:0;top:319px;width:385px;height:18px"></div>
  <div class="dots" style="left:368px;top:326.5px"><i style="left:0"></i><i style="left:4px"></i><i style="left:8px"></i></div>
</div>

<!-- Video Player window -->
<div class="win" style="left:496px;top:149px;width:237px;height:238px">
  <svg class="a" style="left:3px;top:4px" width="11" height="10" viewBox="0 0 11 10">
    <path d="M2.5 1.8 L8.5 0.6 L8.8 1.6 L2.8 2.8 Z" fill="#7a8898"/>
    <rect x="0.4" y="2.5" width="9.3" height="7.3" fill="#3d6590"/>
    <rect x="1.5" y="3.7" width="7.1" height="5" fill="#62a6dc"/>
  </svg>
  <div class="t" style="left:19.5px;top:4px;font-size:9.5px;color:#000">Video Player</div>
  <div class="sep" style="left:0;top:17px;width:237px;background:#e2e2e2"></div>
  <div class="a" style="left:202px;top:5px;width:9px;height:8px;border:1px solid #555"></div>
  <svg class="a" style="left:221px;top:4.5px" width="11" height="10" viewBox="0 0 11 10"><path d="M0.9 0.6 L9.2 8.2 M9.2 0.6 L0.9 8.2" stroke="#333" stroke-width="1"/></svg>
  <svg class="a" style="left:7.5px;top:23px" width="16" height="14" viewBox="0 0 16 14">
    <path d="M0.5 6.5 Q0.5 4 3 4 L11 4 Q13.5 4 13.5 6.5 L13.5 9.5 Q13.5 11.5 11 11.5 L3 11.5 Q0.5 11.5 0.5 9.5 Z" fill="#f0de80"/>
    <path d="M1 8 Q7 6 13.5 8.5 L13.5 10 Q13 11.5 11 11.5 L3 11.5 Q1 11.5 1 10 Z" fill="#e8cc60"/>
    <path d="M3 4.5 Q7 0.5 11.5 3 L13 2 L13.5 7.5 L8.8 7 L10.5 5.5 Q7.5 3.2 4.5 5.8 Z" fill="#3aa832"/>
    <path d="M5 3 Q8 1.5 10.5 3" stroke="#1e7a20" stroke-width="0.8" fill="none"/>
  </svg>
  <div class="a" style="left:0;top:39px;width:237px;height:181px;background:#000"></div>
  <div class="foot" style="left:0;top:220px;width:237px;height:18px"></div>
  <div class="dots" style="left:219px;top:227.5px"><i style="left:0"></i><i style="left:4px"></i><i style="left:8px"></i></div>
</div>

<!-- Music Player window -->
<div class="win" style="left:13px;top:233px;width:238px;height:177px">
  <svg class="a" style="left:4px;top:3px" width="10" height="11" viewBox="0 0 10 11">
    <path d="M5 0.5 L6 0.5 Q6.5 3 9 5 Q9.5 6.5 8.5 7.5 Q8.5 5.5 6 4.5 L6 9 Q6 11 3 10.8 Q0.5 10.5 1.2 9 Q2 7.5 5 8 Z" fill="#3a9ad0"/>
  </svg>
  <div class="t" style="left:20.5px;top:4px;font-size:9.5px;color:#000">Music Player</div>
  <div class="sep" style="left:0;top:16px;width:238px;background:#e2e2e2"></div>
  <div class="a" style="left:202px;top:4px;width:9px;height:8px;border:1px solid #555"></div>
  <svg class="a" style="left:222px;top:3.5px" width="11" height="10" viewBox="0 0 11 10"><path d="M0.4 0.6 L8.7 8.2 M8.7 0.6 L0.4 8.2" stroke="#333" stroke-width="1"/></svg>
  <svg class="a" style="left:9px;top:22px" width="16" height="14" viewBox="0 0 16 14">
    <path d="M0.5 6.5 Q0.5 4 3 4 L11 4 Q13.5 4 13.5 6.5 L13.5 9.5 Q13.5 11.5 11 11.5 L3 11.5 Q0.5 11.5 0.5 9.5 Z" fill="#f0de80"/>
    <path d="M1 8 Q7 6 13.5 8.5 L13.5 10 Q13 11.5 11 11.5 L3 11.5 Q1 11.5 1 10 Z" fill="#e8cc60"/>
    <path d="M3 4.5 Q7 0.5 11.5 3 L13 2 L13.5 7.5 L8.8 7 L10.5 5.5 Q7.5 3.2 4.5 5.8 Z" fill="#3aa832"/>
    <path d="M5 3 Q8 1.5 10.5 3" stroke="#1e7a20" stroke-width="0.8" fill="none"/>
  </svg>
  <div class="a" style="left:0;top:39px;width:238px;height:120px;background:#000;overflow:hidden">
    <svg class="a" style="left:0;top:0;filter:blur(0.7px)" width="238" height="120" viewBox="0 0 238 120">
      <path d="M122 1 L130 1 Q132 4 133.5 8 Q137 18 142 28 Q150 40 158 52 Q164 62 165 73 Q166 84 161 92 Q157 97 153.4 98 Q156 92 155.5 85 Q155 74 151 66 Q146 57 140 52 Q137 49 134 47 L134 120 L122 120 Z" fill="#08375c"/>
      <ellipse cx="104" cy="113" rx="30" ry="17" transform="rotate(-22 104 113)" fill="#08375c"/>
    </svg>
    <div class="t" style="left:72px;top:57px;font-size:30px;color:#ffffff;letter-spacing:0.45px;-webkit-text-stroke:0.35px #000">0.0/0.0</div>
  </div>
  <div class="foot" style="left:0;top:159px;width:238px;height:18px"></div>
  <div class="dots" style="left:220px;top:166.5px"><i style="left:0"></i><i style="left:4px"></i><i style="left:8px"></i></div>
</div>

</body></html>
